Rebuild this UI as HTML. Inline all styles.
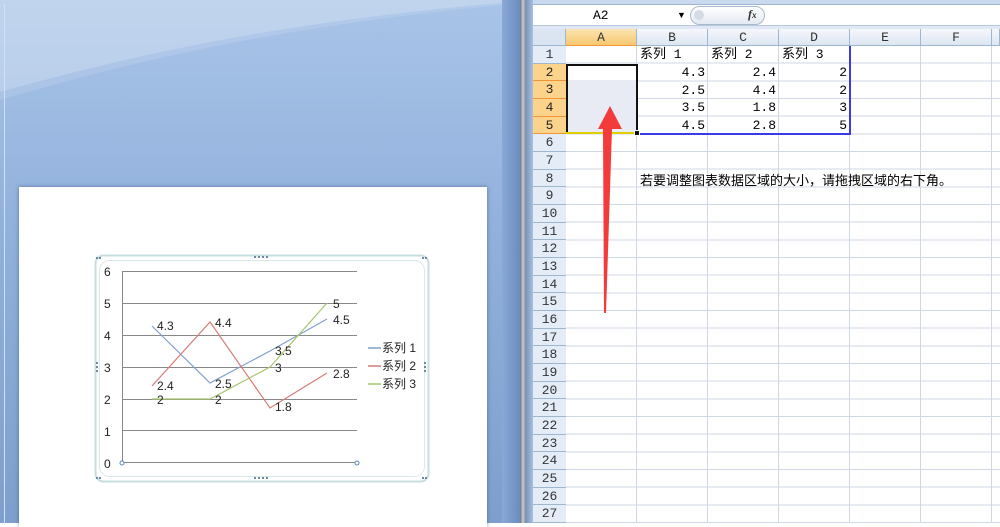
<!DOCTYPE html>
<html><head><meta charset="utf-8"><style>
*{margin:0;padding:0;box-sizing:border-box}
body{width:1000px;height:523px;overflow:hidden;position:relative;background:#fff;font-family:"Liberation Sans","Noto Sans CJK SC",sans-serif}
.left{position:absolute;left:0;top:0;width:502px;height:523px;background:linear-gradient(180deg,#a9c4e8 0%,#93b2dd 40%,#7e9fcd 100%)}
.page{position:absolute;left:19px;top:187px;width:468px;height:340px;background:#fff;box-shadow:0 0 4px rgba(40,60,100,.5)}
.div{position:absolute;top:0;height:523px}
.mono{font-family:"Liberation Mono","Noto Sans CJK SC",monospace}
.rh{position:absolute;left:533px;width:33px;text-align:center;font-size:13px;color:#333;height:17.67px;line-height:18px;border-bottom:1px solid #9eb6ce;background:#e4ecf7}
.rh.sel{background:#fbd38a;border-bottom-color:#f29536;color:#222}
.ch{position:absolute;top:29px;height:17px;line-height:17px;text-align:center;font-size:13px;color:#333;background:linear-gradient(#f4f7fb,#dde6f2);border-right:1px solid #9eb6ce;border-bottom:1px solid #9eb6ce}
.c{position:absolute;font-size:13px;color:#000;height:17px;line-height:18px;white-space:nowrap}
</style></head><body>
<div class="left"><svg style="position:absolute;left:0;top:0" width="502" height="110"><path d="M0,0 L502,0 L502,3 C300,20 150,50 0,92 Z" fill="rgba(255,255,255,0.28)"/><path d="M0,92 C150,50 300,20 502,3 L502,5 C300,24 150,56 0,100 Z" fill="rgba(255,255,255,0.12)"/></svg><div style="position:absolute;left:4px;top:4px;width:1px;height:520px;background:#cfe0f7"></div></div>
<div class="page"></div>
<div class="div" style="left:502px;width:18px;background:linear-gradient(90deg,#8aa9d6,#6b8cc0)"></div>
<div class="div" style="left:520px;width:6px;background:linear-gradient(90deg,#6c7884,#c6ccd4,#7c8894)"></div>
<div class="div" style="left:526px;width:7px;background:linear-gradient(90deg,#7a96be,#a8c0e0)"></div>
<div style="position:absolute;left:533px;top:0;width:467px;height:5px;background:#c9d9ee;border-bottom:1px solid #9fb5d3"></div>
<div style="position:absolute;left:533px;top:5px;width:467px;height:21px;background:#fff;border-bottom:1px solid #b8c8dc"></div>
<div class="mono" style="position:absolute;left:593px;top:8px;font-size:13px">A2</div>
<div style="position:absolute;left:677px;top:10px;font-size:9px">▼</div>
<div style="position:absolute;left:690px;top:6px;width:75px;height:19px;border:1px solid #a9b9cc;border-radius:10px;background:linear-gradient(#fff,#e3e9f1)"></div>
<div style="position:absolute;left:694px;top:10px;width:10px;height:10px;border-radius:5px;background:#d4dbe4"></div>
<div style="position:absolute;left:748px;top:7px;font-size:12px;font-style:italic;font-weight:bold;font-family:'Liberation Serif',serif;color:#333">f<span style="font-size:9px">x</span></div>
<div style="position:absolute;left:533px;top:26px;width:467px;height:3px;background:#dfe8f4"></div>
<div style="position:absolute;left:566px;top:46px;width:434px;height:477px;
background-image:repeating-linear-gradient(90deg,transparent 0 70px,#d0d7e5 70px 71px),repeating-linear-gradient(180deg,transparent 0 16.67px,#d0d7e5 16.67px 17.67px)"></div>
<div style="position:absolute;left:567px;top:82px;width:69px;height:51px;background:#e8ebf4"></div>
<div style="position:absolute;left:637px;top:46px;width:214px;height:89px;border-right:2px solid #3a3ae6;border-bottom:2px solid #3a3ae6"></div>
<div style="position:absolute;left:566px;top:64px;width:72px;height:70px;border:2px solid #111;border-bottom:none"></div>
<div style="position:absolute;left:566px;top:132px;width:71px;height:2px;background:#e0d000"></div>
<div style="position:absolute;left:634px;top:130px;width:6px;height:6px;background:#111;border:1px solid #fff"></div>
<div class="ch" style="left:533px;width:33px;background:#dbe5f1"></div>
<div class="ch mono" style="left:566px;width:71px;background:linear-gradient(#fbe3b2,#f8c770);border-bottom-color:#f29536">A</div>
<div class="ch mono" style="left:637px;width:71px">B</div>
<div class="ch mono" style="left:708px;width:71px">C</div>
<div class="ch mono" style="left:779px;width:71px">D</div>
<div class="ch mono" style="left:850px;width:71px">E</div>
<div class="ch mono" style="left:921px;width:71px">F</div>
<div class="ch" style="left:992px;width:8px"></div>
<div class="mono">
<div class="rh" style="top:46px">1</div>
<div class="rh sel" style="top:63.67px">2</div>
<div class="rh sel" style="top:81.33px">3</div>
<div class="rh sel" style="top:99px">4</div>
<div class="rh sel" style="top:116.67px">5</div>
<div class="rh" style="top:134.33px">6</div>
<div class="rh" style="top:152px">7</div>
<div class="rh" style="top:169.67px">8</div>
<div class="rh" style="top:187.33px">9</div>
<div class="rh" style="top:205px">10</div>
<div class="rh" style="top:222.67px">11</div>
<div class="rh" style="top:240.33px">12</div>
<div class="rh" style="top:258px">13</div>
<div class="rh" style="top:275.67px">14</div>
<div class="rh" style="top:293.33px">15</div>
<div class="rh" style="top:311px">16</div>
<div class="rh" style="top:328.67px">17</div>
<div class="rh" style="top:346.33px">18</div>
<div class="rh" style="top:364px">19</div>
<div class="rh" style="top:381.67px">20</div>
<div class="rh" style="top:399.33px">21</div>
<div class="rh" style="top:417px">22</div>
<div class="rh" style="top:434.67px">23</div>
<div class="rh" style="top:452.33px">24</div>
<div class="rh" style="top:470px">25</div>
<div class="rh" style="top:487.67px">26</div>
<div class="rh" style="top:505.33px">27</div>
</div>
<div class="mono" style="position:absolute;left:0;top:0">
<div class="c" style="left:640px;top:46px">系列 1</div>
<div class="c" style="left:711px;top:46px">系列 2</div>
<div class="c" style="left:782px;top:46px">系列 3</div>
<div class="c" style="left:637px;top:64px;width:68px;text-align:right">4.3</div>
<div class="c" style="left:708px;top:64px;width:68px;text-align:right">2.4</div>
<div class="c" style="left:779px;top:64px;width:68px;text-align:right">2</div>
<div class="c" style="left:637px;top:81.5px;width:68px;text-align:right">2.5</div>
<div class="c" style="left:708px;top:81.5px;width:68px;text-align:right">4.4</div>
<div class="c" style="left:779px;top:81.5px;width:68px;text-align:right">2</div>
<div class="c" style="left:637px;top:99px;width:68px;text-align:right">3.5</div>
<div class="c" style="left:708px;top:99px;width:68px;text-align:right">1.8</div>
<div class="c" style="left:779px;top:99px;width:68px;text-align:right">3</div>
<div class="c" style="left:637px;top:117px;width:68px;text-align:right">4.5</div>
<div class="c" style="left:708px;top:117px;width:68px;text-align:right">2.8</div>
<div class="c" style="left:779px;top:117px;width:68px;text-align:right">5</div>
</div>
<div class="c" style="left:640px;top:172px;font-size:13px">若要调整图表数据区域的大小，请拖拽区域的右下角。</div>
<svg style="position:absolute;left:0;top:0" width="1000" height="523"><polygon points="610,106 622,129 612,129 606,313 604,313 603,129 598,129" fill="#f43b3b"/></svg>
<svg style="position:absolute;left:0;top:0" width="1000" height="523" font-family="Liberation Sans,Noto Sans CJK SC,sans-serif" font-size="12">
<rect x="95.5" y="255.5" width="333" height="226" rx="8" fill="#fff" stroke="#c7dedf" stroke-width="2"/>
<rect x="99.5" y="260.5" width="325" height="216" rx="10" fill="#fff" stroke="#d8e8ea" stroke-width="1"/>
<g fill="#6e8aa0"><rect x="254" y="256" width="2" height="2"/><rect x="258" y="256" width="2" height="2"/><rect x="262" y="256" width="2" height="2"/><rect x="266" y="256" width="2" height="2"/>
<rect x="254" y="477" width="2" height="2"/><rect x="258" y="477" width="2" height="2"/><rect x="262" y="477" width="2" height="2"/><rect x="266" y="477" width="2" height="2"/>
<rect x="96" y="362" width="2" height="2"/><rect x="96" y="366" width="2" height="2"/><rect x="96" y="370" width="2" height="2"/>
<rect x="424" y="362" width="2" height="2"/><rect x="424" y="366" width="2" height="2"/><rect x="424" y="370" width="2" height="2"/>
<rect x="96" y="257" width="2" height="2"/><rect x="99" y="257" width="2" height="2"/><rect x="422" y="257" width="2" height="2"/><rect x="425" y="257" width="2" height="2"/>
<rect x="96" y="477" width="2" height="2"/><rect x="99" y="477" width="2" height="2"/><rect x="422" y="477" width="2" height="2"/><rect x="425" y="477" width="2" height="2"/></g>
<g stroke="#888" stroke-width="1">
<line x1="122" y1="271.5" x2="357" y2="271.5"/><line x1="122" y1="303.5" x2="357" y2="303.5"/><line x1="122" y1="335.5" x2="357" y2="335.5"/><line x1="122" y1="367.5" x2="357" y2="367.5"/><line x1="122" y1="399.5" x2="357" y2="399.5"/><line x1="122" y1="430.5" x2="357" y2="430.5"/><line x1="122" y1="462.5" x2="357" y2="462.5"/><line x1="122.5" y1="271" x2="122.5" y2="463"/></g>
<circle cx="122" cy="463" r="2" fill="#fff" stroke="#5a8ab8"/><circle cx="357" cy="463" r="2" fill="#fff" stroke="#5a8ab8"/>
<g fill="#222"><text x="104" y="276">6</text><text x="104" y="308">5</text><text x="104" y="340">4</text><text x="104" y="372">3</text><text x="104" y="404">2</text><text x="104" y="436">1</text><text x="104" y="468">0</text></g>
<polyline points="152,326 210,383 270,351 327,319" fill="none" stroke="#7f9fd0" stroke-width="1.2"/>
<polyline points="152,386 210,322 270,408 327,373" fill="none" stroke="#d77b78" stroke-width="1.2"/>
<polyline points="152,399 210,399 270,367 327,303" fill="none" stroke="#a7c46e" stroke-width="1.2"/>
<g fill="#222"><text x="157" y="330">4.3</text><text x="215" y="327">4.4</text><text x="333" y="308">5</text><text x="333" y="324">4.5</text>
<text x="275" y="355">3.5</text><text x="275" y="372">3</text><text x="333" y="378">2.8</text><text x="157" y="390">2.4</text><text x="215" y="388">2.5</text>
<text x="157" y="404">2</text><text x="215" y="404">2</text><text x="275" y="411">1.8</text></g>
<line x1="368" y1="348" x2="381" y2="348" stroke="#7f9fd0" stroke-width="1.5"/><text x="382" y="352" fill="#222">系列 1</text>
<line x1="368" y1="366" x2="381" y2="366" stroke="#d77b78" stroke-width="1.5"/><text x="382" y="370" fill="#222">系列 2</text>
<line x1="368" y1="384" x2="381" y2="384" stroke="#a7c46e" stroke-width="1.5"/><text x="382" y="388" fill="#222">系列 3</text>
</svg>
</body></html>
